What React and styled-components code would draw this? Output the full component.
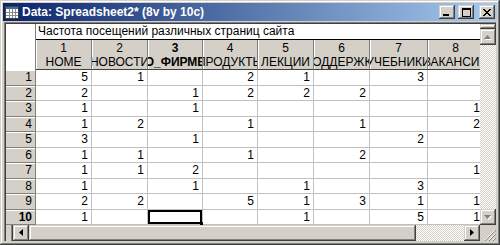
import React from 'react';
import styled, { createGlobalStyle, css } from 'styled-components';

const GlobalStyle = createGlobalStyle`
  html, body { margin: 0; padding: 0; background: #fff; }
  body { font-family: "Liberation Sans", Arial, sans-serif; }
`;

const COL_WIDTHS = [56, 56, 55, 55, 56, 56, 58, 56];

const columns = [
  { n: 1, name: 'HOME' },
  { n: 2, name: 'НОВОСТИ' },
  { n: 3, name: 'О_ФИРМЕ' },
  { n: 4, name: 'ПРОДУКТЫ' },
  { n: 5, name: 'ЛЕКЦИИ' },
  { n: 6, name: 'ПОДДЕРЖКА' },
  { n: 7, name: 'УЧЕБНИКИ' },
  { n: 8, name: 'ВАКАНСИИ' },
];

const rows = [
  [5, 1, '', 2, 1, '', 3, ''],
  [2, '', 1, 2, 2, 2, '', ''],
  [1, '', 1, '', '', '', '', 1],
  [1, 2, '', 1, '', 1, '', 2],
  [3, '', 1, '', '', '', 2, ''],
  [1, 1, '', 1, '', 2, '', ''],
  [1, 1, 2, '', '', '', '', 1],
  [1, '', 1, '', 1, '', 3, ''],
  [2, 2, '', 5, 1, 3, 1, 1],
  [1, '', '', '', 1, '', 5, 1],
];

const activeRow = 9;
const activeCol = 2;

const raised = css`
  background: #d4d0c8;
  box-shadow: inset -1px -1px #404040, inset 1px 1px #d4d0c8,
    inset -2px -2px #808080, inset 2px 2px #fff;
`;

const dither = css`
  background: repeating-conic-gradient(#d4d0c8 0 25%, #fff 0 50%) 0 0 / 2px 2px;
`;

const Window = styled.div`
  width: 500px;
  height: 245px;
  box-sizing: border-box;
  padding: 3px 4px 4px 4px;
  display: flex;
  flex-direction: column;
  ${raised};
`;

const TitleBar = styled.div`
  height: 18px;
  margin: 0 -1px;
  display: flex;
  align-items: center;
  padding: 0 2px;
  gap: 3px;
  background: linear-gradient(to right, #0a246a, #a6caf0);
  color: #fff;
  font: bold 12px "Liberation Sans", Arial, sans-serif;
`;

const TitleText = styled.span`
  flex: 1;
  white-space: nowrap;
`;

const CaptionButton = styled.button`
  width: 16px;
  height: 14px;
  padding: 0;
  border: 0;
  display: flex;
  align-items: center;
  justify-content: center;
  margin-left: ${({ $gap }) => ($gap ? '2px' : '0')};
  ${raised};
`;

const Client = styled.div`
  flex: 1;
  margin-top: 1px;
  padding: 2px 0 0 2px;
  box-shadow: inset 1px 1px #808080, inset 2px 2px #404040;
  display: grid;
  grid-template-columns: 1fr 16px;
  grid-template-rows: 1fr 16px;
  min-height: 0;
`;

const SheetViewport = styled.div`
  overflow: hidden;
  background: #fff;
  min-width: 0;
`;

const Sheet = styled.div`
  display: grid;
  width: max-content;
  height: 100%;
  grid-template-columns: 30px ${COL_WIDTHS.map((w) => `${w}px`).join(' ')};
  grid-template-rows: 16px 30px repeat(10, 1fr);
  font-size: 12px;
  color: #000;
`;

const Corner = styled.div`
  grid-row: 1 / 3;
  grid-column: 1;
  background: #fff;
  border-right: 1px solid #808080;
`;

const SheetTitle = styled.div`
  grid-column: 2 / -1;
  background: #fff;
  border-bottom: 1px solid #000;
  padding-left: 2px;
  line-height: 15px;
  white-space: nowrap;
`;

const ColHeader = styled.div`
  background: #d4d0c8;
  border-right: 1px solid #808080;
  border-bottom: 1px solid #404040;
  box-shadow: inset 1px 0 #fff;
  display: flex;
  flex-direction: column;
  justify-content: center;
  overflow: hidden;
  font-weight: ${({ $active }) => ($active ? 'bold' : 'normal')};
`;

const HeaderLine = styled.div`
  display: flex;
  justify-content: center;
  white-space: nowrap;
  line-height: 14px;
`;

const RowHeader = styled.div`
  background: #d4d0c8;
  border-right: 1px solid #808080;
  border-bottom: 1px solid #808080;
  box-shadow: inset 0 1px #fff;
  display: flex;
  align-items: center;
  justify-content: flex-end;
  padding-right: 3px;
  font-weight: ${({ $active }) => ($active ? 'bold' : 'normal')};
`;

const Cell = styled.div`
  position: relative;
  background: #fff;
  border-right: 1px solid #c0c0c0;
  border-bottom: 1px solid #c0c0c0;
  display: flex;
  align-items: center;
  justify-content: flex-end;
  padding-right: 3px;
  ${({ $selected }) =>
    $selected &&
    css`
      box-shadow: inset 0 0 0 2px #000;
      &::after {
        content: '';
        position: absolute;
        right: -2px;
        bottom: -2px;
        width: 4px;
        height: 4px;
        background: #000;
      }
    `}
`;

const VScroll = styled.div`
  display: flex;
  flex-direction: column;
  ${dither};
`;

const HScroll = styled.div`
  display: flex;
  ${dither};
`;

const Splitter = styled.div`
  flex: none;
  ${({ $vertical }) =>
    $vertical
      ? css`
          height: 5px;
          ${raised};
        `
      : css`
          width: 7px;
          background: #d4d0c8;
          box-shadow: inset -1px 0 #404040, inset -2px 0 #808080;
        `}
`;

const ArrowButton = styled.div`
  flex: none;
  width: 16px;
  height: 16px;
  display: flex;
  align-items: center;
  justify-content: center;
  ${raised};
`;

const Thumb = styled.div`
  flex: none;
  width: 387px;
  ${raised};
`;

const Track = styled.div`
  flex: 1;
`;

const Grip = styled.div`
  background: #d4d0c8;
  display: flex;
  align-items: flex-end;
  justify-content: flex-end;
`;

const Arrow = ({ dir, disabled }) => {
  const shapes = {
    up: '0,4 3.5,0 7,4',
    down: '0,0 7,0 3.5,4',
    left: '4,0 4,7 0,3.5',
    right: '0,0 0,7 4,3.5',
  };
  const horiz = dir === 'left' || dir === 'right';
  const w = horiz ? 5 : 8;
  const h = horiz ? 8 : 5;
  return (
    <svg width={w} height={h} viewBox={`0 0 ${w} ${h}`}>
      {disabled && (
        <polygon points={shapes[dir]} fill="#fff" transform="translate(1 1)" />
      )}
      <polygon points={shapes[dir]} fill={disabled ? '#808080' : '#000'} />
    </svg>
  );
};

const SheetIcon = () => (
  <svg width="14" height="13" viewBox="0 0 14 13">
    <rect x="0.5" y="0.5" width="13" height="12" fill="#fff" stroke="#404040" />
    <rect x="1" y="1" width="12" height="2" fill="#3a6ea5" />
    <path d="M4.5 3v9M7.5 3v9M10.5 3v9M1 6.5h12M1 9.5h12" stroke="#8a8a8a" />
  </svg>
);

const SizeGrip = () => (
  <svg width="12" height="12" viewBox="0 0 12 12">
    <path d="M11 1L1 11M11 5L5 11M11 9L9 11" stroke="#fff" />
    <path d="M12 1L1 12M12 5L5 12M12 9L9 12" stroke="#808080" />
  </svg>
);

export default function App() {
  return (
    <>
      <GlobalStyle />
      <Window>
        <TitleBar>
          <SheetIcon />
          <TitleText>Data: Spreadsheet2* (8v by 10c)</TitleText>
          <CaptionButton>
            <svg width="8" height="8" viewBox="0 0 8 8">
              <rect x="0" y="6" width="6" height="2" fill="#000" />
            </svg>
          </CaptionButton>
          <CaptionButton>
            <svg width="9" height="9" viewBox="0 0 9 9">
              <rect x="0.5" y="0.5" width="8" height="8" fill="none" stroke="#000" />
              <rect x="0" y="0" width="9" height="2" fill="#000" />
            </svg>
          </CaptionButton>
          <CaptionButton $gap>
            <svg width="8" height="7" viewBox="0 0 8 7">
              <path d="M0 0l7 7M1 0l7 7M7 0l-7 7M8 0l-7 7" stroke="#000" strokeWidth="1" />
            </svg>
          </CaptionButton>
        </TitleBar>
        <Client>
          <SheetViewport>
            <Sheet>
              <Corner />
              <SheetTitle>Частота посещений различных страниц сайта</SheetTitle>
              {columns.map((c, i) => (
                <ColHeader key={c.n} $active={i === activeCol}>
                  <HeaderLine>{c.n}</HeaderLine>
                  <HeaderLine>{c.name}</HeaderLine>
                </ColHeader>
              ))}
              {rows.map((r, ri) => (
                <React.Fragment key={ri}>
                  <RowHeader $active={ri === activeRow}>{ri + 1}</RowHeader>
                  {r.map((v, ci) => (
                    <Cell key={ci} $selected={ri === activeRow && ci === activeCol}>
                      {v}
                    </Cell>
                  ))}
                </React.Fragment>
              ))}
            </Sheet>
          </SheetViewport>
          <VScroll>
            <Splitter $vertical />
            <ArrowButton>
              <Arrow dir="up" disabled />
            </ArrowButton>
            <Track />
            <ArrowButton>
              <Arrow dir="down" disabled />
            </ArrowButton>
          </VScroll>
          <HScroll>
            <Splitter />
            <ArrowButton>
              <Arrow dir="left" />
            </ArrowButton>
            <Thumb />
            <Track />
            <ArrowButton>
              <Arrow dir="right" />
            </ArrowButton>
          </HScroll>
          <Grip>
            <SizeGrip />
          </Grip>
        </Client>
      </Window>
    </>
  );
}
